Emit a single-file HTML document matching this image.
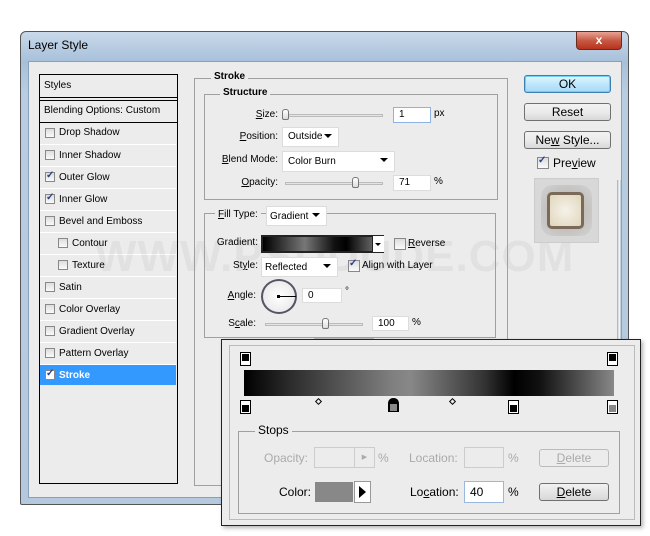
<!DOCTYPE html>
<html><head><style>
*{margin:0;padding:0;box-sizing:border-box}
body{width:650px;height:536px;background:#fff;position:relative;font-family:"Liberation Sans",Tahoma,sans-serif;font-size:10px;color:#000;overflow:hidden}
.a{position:absolute}
.win{left:20px;top:31px;width:609px;height:474px;border:1px solid #555;border-radius:6px 6px 2px 2px;background:linear-gradient(#c9d9ea,#a7c0da 30px,#b8cde2 60px,#b4c8de);}
.body{left:28px;top:61px;width:594px;height:437px;background:#ececec;border:1px solid #8aa0b8}
.item{position:absolute;left:40px;width:136px;height:22px;border-top:1px solid #fff;line-height:21px;padding-left:19px;font-size:10px}
.cb{position:absolute;width:10px;height:10px;border:1px solid #888;background:linear-gradient(#ddd,#fafafa)}
.cb.c::after{content:"✓";position:absolute;left:0px;top:-3px;font-size:10px;color:#2a3f88;font-weight:bold}
.grp{position:absolute;border:1px solid #a0a0a0}
.lbl{position:absolute;background:#ececec;padding:0 3px;font-weight:bold;font-size:10px}
.in{position:absolute;background:#fff;border:1px solid #dcdcdc;font-size:10px;padding-left:5px;line-height:14px}
.dd::after{content:"";position:absolute;right:6px;top:6px;border:4px solid transparent;border-top:4px solid #000;border-bottom:0}
.btn{position:absolute;left:524px;width:87px;height:18px;border:1px solid #707070;border-radius:3px;background:linear-gradient(#f2f2f2,#ebebeb 50%,#d8d8d8);text-align:center;font-size:12px;line-height:16px}
.r{position:absolute;text-align:right;font-size:10px}
.track{position:absolute;height:3px;border:1px solid #bbb;background:#e4e4e4}
.thumb{position:absolute;width:7px;height:11px;border:1px solid #777;border-radius:3px 3px 2px 2px;background:linear-gradient(#fff,#ddd)}
.stop{position:absolute;width:11px;height:14px}
</style></head><body>
<div class="a win"></div>
<div class="a" style="left:28px;top:38px;font-size:12px;font-family:'Liberation Sans',sans-serif">Layer Style</div>
<div class="a" style="left:576px;top:31px;width:46px;height:19px;border:1px solid #6b2a20;border-radius:0 0 4px 4px;background:linear-gradient(#e9a394,#c75a44 50%,#b8321d);color:#fff;text-align:center;font-weight:bold;font-size:12px;line-height:17px">x</div>
<div class="a body"></div>

<!-- left list -->
<div class="a" style="left:39px;top:74px;width:139px;height:410px;border:1px solid #000;background:#ececec"></div>
<div class="a" style="left:44px;top:80px;font-size:10px">Styles</div>
<div class="a" style="left:40px;top:97px;width:137px;height:4px;border-top:1px solid #000;border-bottom:1px solid #000"></div>
<div class="a" style="left:44px;top:105px;font-size:10px">Blending Options: Custom</div>
<div class="a" style="left:40px;top:122px;width:137px;border-top:1px solid #000"></div>
<div class="item" style="top:122px;border-top:0">Drop Shadow</div><div class="cb" style="left:45px;top:128px"></div>
<div class="item" style="top:144px">Inner Shadow</div><div class="cb" style="left:45px;top:150px"></div>
<div class="item" style="top:166px">Outer Glow</div><div class="cb c" style="left:45px;top:172px"></div>
<div class="item" style="top:188px">Inner Glow</div><div class="cb c" style="left:45px;top:194px"></div>
<div class="item" style="top:210px">Bevel and Emboss</div><div class="cb" style="left:45px;top:216px"></div>
<div class="item" style="top:232px;padding-left:32px">Contour</div><div class="cb" style="left:58px;top:238px"></div>
<div class="item" style="top:254px;padding-left:32px">Texture</div><div class="cb" style="left:58px;top:260px"></div>
<div class="item" style="top:276px">Satin</div><div class="cb" style="left:45px;top:282px"></div>
<div class="item" style="top:298px">Color Overlay</div><div class="cb" style="left:45px;top:304px"></div>
<div class="item" style="top:320px">Gradient Overlay</div><div class="cb" style="left:45px;top:326px"></div>
<div class="item" style="top:342px">Pattern Overlay</div><div class="cb" style="left:45px;top:348px"></div>
<div class="item" style="top:364px;background:#3399ff;color:#fff;font-weight:bold;height:21px">Stroke</div><div class="cb c" style="left:45px;top:370px;background:#fff"></div>

<!-- watermark -->
<div class="a" style="left:95px;top:232px;font-size:44px;font-weight:bold;color:#000;opacity:0.04;letter-spacing:1px">WWW.PSDDUDE.COM</div>

<!-- stroke group -->
<div class="grp" style="left:194px;top:78px;width:314px;height:408px"></div>
<div class="lbl" style="left:211px;top:71px">Stroke</div>
<div class="grp" style="left:204px;top:94px;width:294px;height:106px"></div>
<div class="lbl" style="left:220px;top:87px">Structure</div>
<div class="r" style="left:220px;top:109px;width:58px"><u>S</u>ize:</div>
<div class="track" style="left:285px;top:114px;width:98px"></div>
<div class="thumb" style="left:282px;top:109px"></div>
<div class="in" style="left:393px;top:107px;width:38px;height:16px;border-color:#8db2e3">1</div>
<div class="a" style="left:434px;top:108px">px</div>
<div class="r" style="left:220px;top:131px;width:58px"><u>P</u>osition:</div>
<div class="in dd" style="left:282px;top:127px;width:57px;height:20px;line-height:18px">Outside</div>
<div class="r" style="left:210px;top:154px;width:68px"><u>B</u>lend Mode:</div>
<div class="in dd" style="left:282px;top:151px;width:113px;height:21px;line-height:19px">Color Burn</div>
<div class="r" style="left:220px;top:177px;width:58px"><u>O</u>pacity:</div>
<div class="track" style="left:285px;top:182px;width:98px"></div>
<div class="thumb" style="left:352px;top:177px"></div>
<div class="in" style="left:393px;top:175px;width:38px;height:16px">71</div>
<div class="a" style="left:434px;top:176px">%</div>

<div class="grp" style="left:204px;top:213px;width:292px;height:125px"></div>
<div class="lbl" style="left:215px;top:209px;font-weight:normal"><u>F</u>ill Type:</div>
<div class="in dd" style="left:266px;top:206px;width:61px;height:20px;line-height:19px;padding-left:3px">Gradient</div>
<div class="r" style="left:208px;top:237px;width:50px">Gradient:</div>
<div class="a" style="left:261px;top:235px;width:123px;height:18px;border:2px solid #222;background:linear-gradient(90deg,#000,#777 35%,#111 60%,#000 70%,#888)"></div>
<div class="a" style="left:372px;top:236px;width:12px;height:16px;background:#fff;border-left:1px solid #222"></div>
<div class="a" style="left:375px;top:243px;border:3px solid transparent;border-top:3px solid #000"></div>
<div class="cb" style="left:394px;top:238px;width:12px;height:12px"></div>
<div class="a" style="left:408px;top:238px"><u>R</u>everse</div>
<div class="r" style="left:208px;top:260px;width:50px">St<u>y</u>le:</div>
<div class="in dd" style="left:261px;top:257px;width:77px;height:20px;line-height:19px;padding-left:3px">Reflected</div>
<div class="cb c" style="left:348px;top:260px;width:12px;height:12px"></div>
<div class="a" style="left:362px;top:260px">Align with Layer</div>
<div class="r" style="left:208px;top:290px;width:48px"><u>A</u>ngle:</div>
<div class="a" style="left:261px;top:279px;width:36px;height:35px;border:2px solid #556;border-radius:50%;background:radial-gradient(#fff,#e4e4e4)"></div>
<div class="a" style="left:278px;top:296px;width:18px;border-top:1px solid #000"></div>
<div class="a" style="left:277px;top:295px;width:3px;height:3px;background:#000"></div>
<div class="in" style="left:302px;top:288px;width:40px;height:15px">0</div>
<div class="a" style="left:345px;top:286px">°</div>
<div class="r" style="left:208px;top:318px;width:48px">S<u>c</u>ale:</div>
<div class="track" style="left:265px;top:323px;width:98px"></div>
<div class="thumb" style="left:322px;top:318px"></div>
<div class="in" style="left:372px;top:316px;width:37px;height:15px">100</div>
<div class="a" style="left:412px;top:317px">%</div>

<!-- right buttons -->
<div class="btn" style="top:75px;border-color:#3c7fb1;background:linear-gradient(#e5f6fd,#bde6fd 50%,#a7d9f5);box-shadow:0 0 0 1px #6ed0f7 inset">OK</div>
<div class="btn" style="top:103px">Reset</div>
<div class="btn" style="top:131px">Ne<u>w</u> Style...</div>
<div class="cb c" style="left:537px;top:157px;width:12px;height:12px"></div>
<div class="a" style="left:553px;top:156px;font-size:12px">Pre<u>v</u>iew</div>
<div class="a" style="left:534px;top:178px;width:65px;height:65px;background:#d8d8d8;border:1px solid #ccc"></div>
<div class="a" style="left:541px;top:185px;width:51px;height:51px;border-radius:12px;background:radial-gradient(#b5a9a0,#ccc 80%)"></div>
<div class="a" style="left:547px;top:192px;width:37px;height:37px;border-radius:5px;border:3px solid #7a6a5a;background:radial-gradient(#f5f2ea,#e1d6bb)"></div>
<div class="a" style="left:617px;top:180px;width:5px;height:320px;background:linear-gradient(90deg,#9ab,#fff,#789)"></div>

<!-- gradient editor popup -->
<div class="a" style="left:314px;top:338px;width:60px;height:5px;background:#fff;border:1px solid #bbb"></div>
<div class="a" style="left:221px;top:339px;width:420px;height:187px;background:#ececec;border:1px solid #222;box-shadow:2px 2px 4px rgba(0,0,0,.3)"></div>
<div class="a" style="left:229px;top:345px;width:406px;height:175px;border:1px solid #bbb"></div>
<div class="a" style="left:244px;top:370px;width:370px;height:26px;background:linear-gradient(90deg,#000,#2a2a2a 12%,#7f7f7f 40%,#888 45%,#333 65%,#000 73%,#111 80%,#888)"></div>
<div class="stop" style="left:240px;top:352px;border:1px solid #000;background:#fff"><div class="a" style="left:1px;top:1px;width:7px;height:7px;background:#000"></div></div>
<div class="stop" style="left:607px;top:352px;border:1px solid #000;background:#fff"><div class="a" style="left:1px;top:1px;width:7px;height:7px;background:#000"></div></div>
<div class="stop" style="left:240px;top:400px;border:1px solid #000;background:#fff"><div class="a" style="left:1px;top:4px;width:7px;height:7px;background:#000"></div></div>
<div class="stop" style="left:388px;top:398px;border:1px solid #000;background:#000;border-radius:5px 5px 0 0"><div class="a" style="left:1px;top:5px;width:7px;height:7px;background:#888"></div></div>
<div class="stop" style="left:508px;top:400px;border:1px solid #000;background:#fff"><div class="a" style="left:1px;top:4px;width:7px;height:7px;background:#000"></div></div>
<div class="stop" style="left:607px;top:400px;border:1px solid #000;background:#fff"><div class="a" style="left:1px;top:4px;width:7px;height:7px;background:#888"></div></div>
<div class="a" style="left:316px;top:399px;width:5px;height:5px;border:1px solid #000;transform:rotate(45deg)"></div>
<div class="a" style="left:450px;top:399px;width:5px;height:5px;border:1px solid #000;transform:rotate(45deg)"></div>

<div class="a" style="left:238px;top:431px;width:382px;height:83px;border:1px solid #a0a0a0"></div>
<div class="a" style="left:255px;top:423px;padding:0 3px;background:#ececec;font-size:12px">Stops</div>
<div class="a" style="left:264px;top:451px;font-size:12px;color:#aaa">Opacity:</div>
<div class="a" style="left:314px;top:447px;width:61px;height:21px;border:1px solid #ccc"></div>
<div class="a" style="left:354px;top:448px;width:20px;height:19px;border-left:1px solid #ccc;color:#aaa;font-size:7px;text-align:center;line-height:19px">▶</div>
<div class="a" style="left:378px;top:451px;font-size:12px;color:#aaa">%</div>
<div class="a" style="left:409px;top:451px;font-size:12px;color:#aaa">Location:</div>
<div class="a" style="left:464px;top:447px;width:40px;height:21px;border:1px solid #ccc"></div>
<div class="a" style="left:508px;top:451px;font-size:12px;color:#aaa">%</div>
<div class="a" style="left:539px;top:449px;width:70px;height:18px;border:1px solid #bbb;border-radius:3px;text-align:center;font-size:12px;line-height:16px;color:#aaa"><u>D</u>elete</div>
<div class="a" style="left:279px;top:485px;font-size:12px">Color:</div>
<div class="a" style="left:315px;top:482px;width:38px;height:20px;background:#888"></div>
<div class="a" style="left:354px;top:481px;width:17px;height:22px;border:1px solid #999;background:#fff"></div>
<div class="a" style="left:359px;top:486px;border:6px solid transparent;border-left:7px solid #000;border-right:0"></div>
<div class="a" style="left:410px;top:485px;font-size:12px">Lo<u>c</u>ation:</div>
<div class="in" style="left:464px;top:481px;width:40px;height:22px;border-color:#9ab8dd;font-size:12px;line-height:20px">40</div>
<div class="a" style="left:508px;top:485px;font-size:12px">%</div>
<div class="a" style="left:539px;top:483px;width:70px;height:18px;border:1px solid #707070;border-radius:3px;background:linear-gradient(#f2f2f2,#d8d8d8);text-align:center;font-size:12px;line-height:16px"><u>D</u>elete</div>
</body></html>
